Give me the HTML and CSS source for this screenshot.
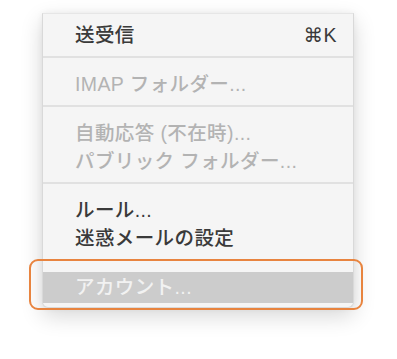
FILE: index.html
```html
<!DOCTYPE html>
<html lang="ja">
<head>
<meta charset="utf-8">
<title>Menu</title>
<link rel="stylesheet" href="styles.css">
</head>
<body>
<div class="stage">
  <div class="menu">
    <div class="item"><span class="label">送受信</span><span class="shortcut">⌘K</span></div>
    <div class="sep"></div>
    <div class="item disabled"><span class="label">IMAP フォルダー...</span></div>
    <div class="sep"></div>
    <div class="item disabled"><span class="label">自動応答 (不在時)...</span></div>
    <div class="item disabled"><span class="label">パブリック フォルダー...</span></div>
    <div class="sep"></div>
    <div class="item"><span class="label">ルール...</span></div>
    <div class="item"><span class="label">迷惑メールの設定</span></div>
    <div class="sep sep-last"></div>
    <div class="item disabled selected"><span class="label">アカウント...</span></div>
  </div>
  <div class="callout"></div>
</div>
</body>
</html>
```

FILE: styles.css
```css
html, body {
  margin: 0;
  padding: 0;
  background: #ffffff;
}

.stage {
  position: relative;
  width: 397px;
  height: 359px;
  overflow: hidden;
  padding-top: 13px;
  padding-left: 42px;
  box-sizing: border-box;
}

.menu {
  width: 312px;
  box-sizing: border-box;
  background: #f5f5f5;
  border: 1px solid #d9d9d9;
  border-top-color: #e6e6e6;
  border-radius: 0 0 6px 6px;
  padding: 7px 0 4px;
  box-shadow: 0 8px 22px rgba(0, 0, 0, 0.16), 0 0 6px rgba(0, 0, 0, 0.06);
  font-family: "Liberation Sans", "Noto Sans CJK JP", sans-serif;
  font-size: 19.5px;
  font-weight: 500;
  color: #3a3a3a;
}

.item {
  display: flex;
  justify-content: space-between;
  align-items: center;
  height: 28px;
  line-height: 28px;
  padding: 0 16px 0 32px;
  white-space: nowrap;
}

.label {
  letter-spacing: 0.4px;
}

.shortcut {
  font-family: "Liberation Sans", "DejaVu Sans", sans-serif;
  letter-spacing: 0.5px;
}

.disabled {
  color: #b3b3b3;
}

.sep {
  height: 2px;
  background: #e1e1e1;
  margin: 7px 0 12px;
}

.sep-last {
  margin-bottom: 11px;
}

.selected {
  background: #cccccc;
  color: #f2f2f2;
  padding-top: 1px;
  padding-bottom: 2px;
}

.callout {
  position: absolute;
  left: 29px;
  top: 259px;
  width: 334px;
  height: 51px;
  box-sizing: border-box;
  border: 2.5px solid #e8843f;
  border-radius: 9px;
}
```
